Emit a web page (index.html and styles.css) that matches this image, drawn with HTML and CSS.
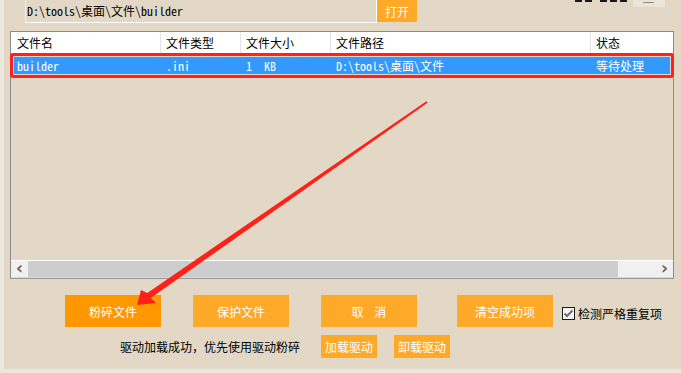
FILE: index.html
```html
<!DOCTYPE html>
<html lang="zh-CN">
<head>
  <meta charset="UTF-8">
  <title>文件粉碎</title>
  <link rel="stylesheet" href="styles.css">
</head>
<body>
  <div class="window">
    <div class="pathbar">
      <div class="path mono">D:\tools\桌面\文件\builder</div>
      <button class="btn open">打开</button>
      <div class="cut-text"><i></i><i></i><i></i><i></i><i></i></div>
      <div class="cut-box"><span></span></div>
    </div>

    <div class="list">
      <div class="row head">
        <div class="col c1">文件名</div>
        <div class="col c2">文件类型</div>
        <div class="col c3">文件大小</div>
        <div class="col c4">文件路径</div>
        <div class="col c5">状态</div>
      </div>
      <div class="list-body">
        <div class="row item selected">
          <div class="col c1 mono">builder</div>
          <div class="col c2 mono">.ini</div>
          <div class="col c3 mono">1  KB</div>
          <div class="col c4 mono">D:\tools\桌面\文件</div>
          <div class="col c5">等待处理</div>
        </div>
      </div>
      <div class="hscroll">
        <span class="sb-btn">&lsaquo;</span>
        <span class="sb-thumb"></span>
        <span class="sb-track"></span>
        <span class="sb-btn">&rsaquo;</span>
      </div>
    </div>

    <div class="actions">
      <button class="btn big active">粉碎文件</button>
      <button class="btn big">保护文件</button>
      <button class="btn big">取&nbsp;&nbsp;&nbsp;&nbsp;消</button>
      <button class="btn big">清空成功项</button>
      <label class="check">
        <span class="box">
          <svg width="11" height="11" viewBox="0 0 11 11"><path d="M1.5 5.5 L4 8 L9.5 2.5" fill="none" stroke="#6e6e6e" stroke-width="2"/></svg>
        </span>
        检测严格重复项
      </label>
    </div>

    <div class="driver">
      <span class="status">驱动加载成功，优先使用驱动粉碎</span>
      <button class="btn small">加载驱动</button>
      <button class="btn small">卸载驱动</button>
    </div>

    <!-- 标注 -->
    <div class="mark"></div>
    <svg class="arrow" width="681" height="373" viewBox="0 0 681 373">
      <polygon fill="#ff2118" points="137,305 141,290 147.3,293 426.4,101.3 427.6,102.7 150.7,298 156,303"/>
    </svg>
  </div>
</body>
</html>
```

FILE: styles.css
```css
* {
  box-sizing: border-box;
  margin: 0;
  padding: 0;
}

body {
  width: 681px;
  height: 373px;
  overflow: hidden;
  background: #ece7dc;
  font-family: "Noto Sans CJK SC", sans-serif;
  font-size: 12px;
  color: #000;
}

.window {
  position: relative;
  width: 681px;
  height: 369px;
  margin-left: 4px;
  background: #e2d8c5;
  display: flex;
  flex-direction: column;
}

.mono {
  font-family: "Noto Sans Mono CJK SC", "Liberation Mono", "Noto Sans CJK SC", monospace;
  font-size: 12px;
}

.btn {
  border: none;
  background: #ffa928;
  color: #fff;
  font-family: "Noto Sans CJK SC", sans-serif;
  font-size: 12px;
  cursor: pointer;
}

.pathbar {
  display: flex;
  align-items: flex-start;
  height: 23px;
  margin-left: 21px;
}

.path {
  width: 352px;
  height: 23px;
  line-height: 22px;
  padding-left: 1px;
  border-left: 1px solid #f3efe7;
  border-right: 1px solid #fff;
  border-bottom: 1px solid #fff;
}

.open {
  width: 40px;
  height: 22px;
}

/* bottom of a clipped label above the view */
.cut-text {
  display: flex;
  gap: 3px;
  margin-left: 158px;
  width: 50px;
  height: 2px;
}

.cut-text i {
  display: block;
  flex: none;
  width: 7px;
  height: 2px;
  background: #1a1a1a;
}

.cut-text i:nth-child(3) {
  margin-left: 5px;
}

.cut-box {
  margin-left: 8px;
  width: 32px;
  height: 7px;
  background: #ebe5d8;
}

.cut-box span {
  display: block;
  width: 11px;
  height: 1px;
  margin: 2px 0 0 10px;
  background: #8a8a8a;
}

.list {
  margin: 8px 0 0 6px;
  width: 664px;
  height: 248px;
  border: 1px solid #8a8a8a;
  border-bottom-color: #999;
  display: flex;
  flex-direction: column;
  padding-bottom: 1px;
  background: #e2d8c5;
}

.row {
  display: flex;
}

.head {
  height: 21px;
  line-height: 21px;
  background: #fff;
}

.col {
  padding-left: 5px;
  white-space: pre;
  overflow: hidden;
}

.head .col {
  border-right: 1px solid #e3e3e3;
}

.c1 { width: 150px; padding-left: 6px; }
.c2 { width: 80px; }
.c3 { width: 90px; }
.c4 { width: 260px; }
.c5 { flex: 1; }

.head .c5 {
  border-right: none;
}

.list-body {
  flex: 1;
  padding: 4px 3px 0;
}

.item {
  height: 17px;
  line-height: 17px;
  color: #fff;
}

.item .c1 { width: 147px; padding-left: 3px; }

.selected {
  background: #3399ff;
}

.hscroll {
  display: flex;
  height: 17px;
  border-top: 1px solid #fff;
}

.sb-btn {
  width: 17px;
  background: #f0f0f0;
  color: #606060;
  font-family: "DejaVu Sans", sans-serif;
  font-size: 17px;
  font-weight: bold;
  line-height: 14px;
  text-align: center;
}

.sb-thumb {
  width: 590px;
  background: #cdcdcd;
}

.sb-track {
  flex: 1;
  background: #f0f0f0;
}

.actions {
  display: flex;
  align-items: center;
  margin-top: 16px;
  padding-left: 61px;
  height: 32px;
}

.big {
  width: 96px;
  height: 32px;
  margin-right: 32px;
}

.big:nth-child(3) {
  margin-right: 40px;
}

.big:nth-child(4) {
  margin-right: 9px;
}

.active {
  background: #ff9800;
}

.check {
  display: flex;
  align-items: center;
  gap: 3px;
  padding-top: 4px;
}

.box {
  width: 13px;
  height: 13px;
  border: 1px solid #1c1c1c;
  background: #f5f5f5;
  display: flex;
  align-items: center;
  justify-content: center;
}

.driver {
  display: flex;
  align-items: center;
  margin-top: 8px;
  padding-left: 116px;
  height: 23px;
}

.status {
  width: 180px;
  margin-right: 21px;
  white-space: nowrap;
}

.small {
  width: 56px;
  height: 23px;
  margin-right: 17px;
}

.mark {
  position: absolute;
  left: 6px;
  top: 53px;
  width: 664px;
  height: 25px;
  border: 3px solid #ff2121;
  border-radius: 3px;
}

.arrow {
  position: absolute;
  left: -4px;
  top: 0;
  pointer-events: none;
}
```
